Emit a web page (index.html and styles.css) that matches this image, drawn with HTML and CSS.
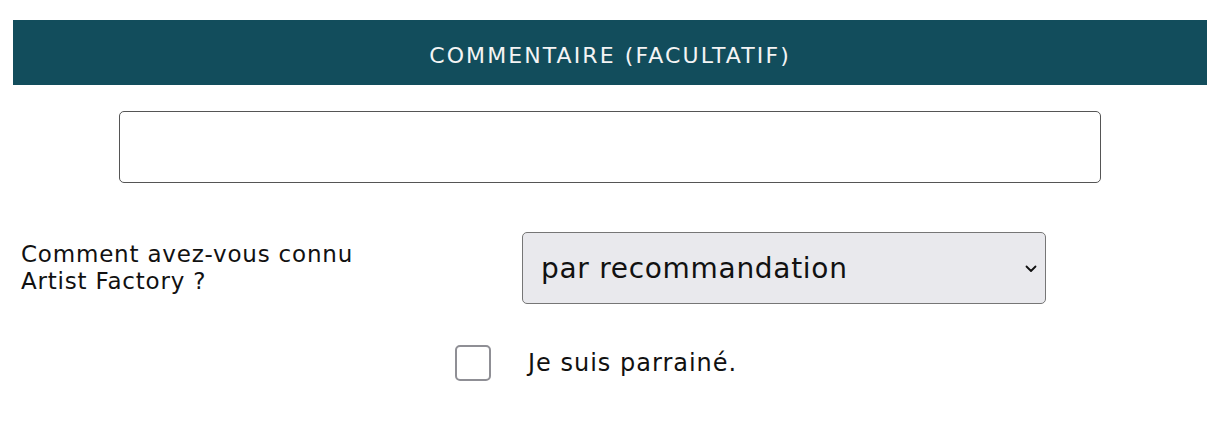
FILE: index.html
```html
<!DOCTYPE html>
<html lang="fr">
<head>
<meta charset="utf-8">
<title>Commentaire</title>
<link rel="stylesheet" href="styles.css">
</head>
<body>
<form class="form">
  <h2 class="section-header">COMMENTAIRE (FACULTATIF)</h2>
  <div class="comment-row">
    <textarea class="comment" aria-label="Commentaire"></textarea>
  </div>
  <div class="source-row">
    <label class="source-label" for="source">Comment avez-vous connu<br>Artist Factory ?</label>
    <div class="select-wrap">
      <select id="source" class="source-select">
        <option>par recommandation</option>
      </select>
      <svg class="chevron" width="12" height="8" viewBox="0 0 12 8" aria-hidden="true"><path d="M1.5 1.5 L6 6 L10.5 1.5" fill="none" stroke="#111" stroke-width="1.8" stroke-linecap="round" stroke-linejoin="round"/></svg>
    </div>
  </div>
  <div class="sponsor-row">
    <input type="checkbox" id="sponsor" class="sponsor-box">
    <label for="sponsor" class="sponsor-label">Je suis parrainé.</label>
  </div>
</form>
</body>
</html>
```
FILE: styles.css
```css
* { box-sizing: border-box; }
html, body { margin: 0; padding: 0; background: #fff; }
body {
  font-family: "DejaVu Sans", "Liberation Sans", sans-serif;
  color: #111;
}
.form { padding-top: 20px; }
.section-header {
  margin: 0 6px 0 13px;
  height: 65px;
  padding-top: 5px;
  background: #124d5c;
  color: #f4f4f4;
  font-size: 22px;
  font-weight: normal;
  display: flex;
  align-items: center;
  justify-content: center;
  letter-spacing: 2.1px;
}
.comment-row {
  padding: 26px 0 0 119px;
}
.comment {
  display: block;
  width: 982px;
  height: 72px;
  border: 1px solid #555;
  border-radius: 5px;
  resize: none;
  margin: 0;
}
.source-row {
  display: flex;
  align-items: center;
  margin-top: 49px;
  padding-left: 21px;
}
.source-label {
  width: 501px;
  font-size: 23px;
  line-height: 27px;
  letter-spacing: 0.8px;
}
.select-wrap {
  position: relative;
  width: 524px;
  height: 72px;
}
.source-select {
  appearance: none;
  -webkit-appearance: none;
  width: 100%;
  height: 100%;
  background: #e9e9ed;
  border: 1px solid #767676;
  border-radius: 5px;
  font-family: inherit;
  font-size: 28px;
  letter-spacing: 0.7px;
  color: #111;
  padding: 0 0 0 18px;
  margin: 0;
}
.chevron {
  position: absolute;
  right: 9px;
  top: 33px;
  pointer-events: none;
}
.sponsor-row {
  display: flex;
  align-items: center;
  margin-top: 41px;
  padding-left: 455px;
}
.sponsor-box {
  appearance: none;
  -webkit-appearance: none;
  width: 36px;
  height: 36px;
  margin: 0;
  border: 2px solid #8f8f95;
  border-radius: 5px;
  background: #fff;
}
.sponsor-label {
  margin-left: 37px;
  font-size: 24px;
  letter-spacing: 1px;
}
```
